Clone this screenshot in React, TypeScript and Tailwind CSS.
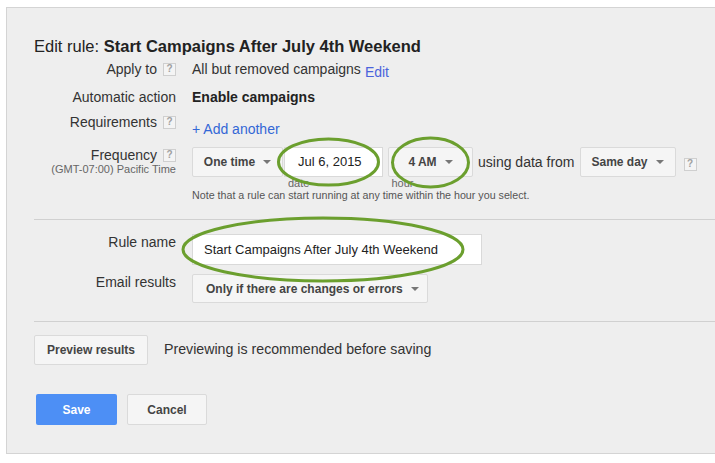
import React from 'react';

function Help() {
    return (
        <span className="inline-flex h-[13px] w-[13px] shrink-0 items-center justify-center border border-[#cfcfcf] bg-[#f4f4f4] text-[10px] font-bold leading-none text-[#a0a0a0]">
            ?
        </span>
    );
}

function Caret() {
    return <span className="ml-[8px] inline-block h-0 w-0 border-x-[4px] border-t-[4px] border-x-transparent border-t-[#777]" />;
}

function DropButton({ label, width }: { label: string; width: string }) {
    return (
        <div className={`flex h-[30px] ${width} shrink-0 items-center justify-center rounded-[2px] border border-[#dadada] bg-[#f5f5f5] text-[12px] font-bold text-[#444]`}>
            {label}
            <Caret />
        </div>
    );
}

function Label({ text, help }: { text: string; help?: boolean }) {
    return (
        <div className="flex w-[142px] shrink-0 items-center justify-end gap-[6px] text-[14px] leading-[20px] text-[#333]">
            <span>{text}</span>
            {help && <Help />}
        </div>
    );
}

export default function App() {
    return (
        <div className="relative h-[463px] w-[715px] overflow-hidden bg-white font-['Liberation_Sans',Arial,sans-serif]">
            <div className="ml-[6px] mt-[7px] flex h-[447px] w-[712px] flex-col border border-r-0 border-[#d4d4d4] bg-[#eeeeee] pl-[27px] pt-[28px]">
                {/* Title */}
                <div className="text-[16.5px] leading-[20px] text-[#222]">
                    Edit rule: <span className="font-bold">Start Campaigns After July 4th Weekend</span>
                </div>

                {/* Apply to */}
                <div className="mt-[3px] flex h-[28px] items-start gap-[16px]">
                    <Label text="Apply to" help />
                    <div className="flex items-start gap-[4px] text-[14px] leading-[20px] text-[#333]">
                        <span>All but removed campaigns</span>
                        <span className="mt-[3px] text-[#4a63dc]">Edit</span>
                    </div>
                </div>

                {/* Automatic action */}
                <div className="flex h-[25px] items-start gap-[16px]">
                    <Label text="Automatic action" />
                    <div className="text-[14px] font-bold leading-[20px] text-[#222]">Enable campaigns</div>
                </div>

                {/* Requirements */}
                <div className="flex h-[33px] items-start gap-[16px]">
                    <Label text="Requirements" help />
                    <div className="mt-[7px] text-[14px] leading-[20px] text-[#3367d6]">+ Add another</div>
                </div>

                {/* Frequency */}
                <div className="flex items-start gap-[16px]">
                    <div className="flex w-[142px] shrink-0 flex-col items-end pt-[1px]">
                        <div className="flex items-center gap-[6px] text-[14px] leading-[18px] text-[#333]">
                            <span>Frequency</span>
                            <Help />
                        </div>
                        <div className="text-[11px] leading-[11px] text-[#666]">(GMT-07:00) Pacific Time</div>
                    </div>
                    <div className="flex flex-col pt-[2px]">
                        <div className="flex items-center">
                            <DropButton label="One time" width="w-[91px]" />
                            <div className="ml-[1px] flex h-[30px] w-[99px] items-center border border-[#d9d9d9] bg-white pl-[13px] text-[13px] text-[#222]">
                                Jul 6, 2015
                            </div>
                            <div className="ml-[5px]">
                                <DropButton label="4 AM" width="w-[85px]" />
                            </div>
                            <span className="ml-[5px] text-[14px] text-[#333]">using data from</span>
                            <div className="ml-[5px]">
                                <DropButton label="Same day" width="w-[96px]" />
                            </div>
                            <div className="ml-[8px]">
                                <Help />
                            </div>
                        </div>
                        <div className="flex h-[12px] text-[11px] leading-[12px] text-[#666]">
                            <span className="ml-[96px]">date</span>
                            <span className="ml-[82px]">hour</span>
                        </div>
                        <div className="text-[10.7px] leading-[12px] text-[#555]">
                            Note that a rule can start running at any time within the hour you select.
                        </div>
                    </div>
                </div>

                <div className="mt-[18px] border-t border-[#d0d0d0]" />

                {/* Rule name */}
                <div className="mt-[12px] flex items-start gap-[16px]">
                    <Label text="Rule name" />
                    <div className="mt-[2px] flex h-[31px] w-[290px] items-center border border-[#d9d9d9] bg-white pl-[11px] text-[13px] text-[#222]">
                        Start Campaigns After July 4th Weekend
                    </div>
                </div>

                {/* Email results */}
                <div className="mt-[7px] flex items-start gap-[16px]">
                    <Label text="Email results" />
                    <div className="mt-[2px] flex h-[29px] w-[236px] items-center rounded-[2px] border border-[#dadada] bg-[#f5f5f5] pl-[13px] text-[12px] font-bold text-[#444]">
                        Only if there are changes or errors
                        <Caret />
                    </div>
                </div>

                <div className="mt-[18px] border-t border-[#d0d0d0]" />

                {/* Preview */}
                <div className="mt-[13px] flex items-center gap-[16px]">
                    <div className="flex h-[30px] w-[114px] items-center justify-center rounded-[2px] border border-[#dadada] bg-[#f5f5f5] text-[12px] font-bold text-[#444]">
                        Preview results
                    </div>
                    <span className="text-[14.2px] text-[#333]">Previewing is recommended before saving</span>
                </div>

                {/* Actions */}
                <div className="ml-[2px] mt-[29px] flex items-center gap-[10px]">
                    <div className="flex h-[31px] w-[81px] items-center justify-center rounded-[2px] bg-[#4d8ff5] text-[12px] font-bold text-white">
                        Save
                    </div>
                    <div className="flex h-[31px] w-[80px] items-center justify-center rounded-[2px] border border-[#dadada] bg-[#f5f5f5] text-[12px] font-bold text-[#444]">
                        Cancel
                    </div>
                </div>
            </div>

            {/* Highlight ellipses drawn over the form */}
            <svg className="pointer-events-none absolute inset-0" width="715" height="463" viewBox="0 0 715 463">
                <ellipse cx="328.5" cy="162" rx="50" ry="23" fill="none" stroke="#6b9f2e" strokeWidth="3" />
                <ellipse cx="430.5" cy="162.5" rx="38" ry="24.5" fill="none" stroke="#6b9f2e" strokeWidth="3" />
                <ellipse cx="323" cy="249.5" rx="140" ry="31.5" fill="none" stroke="#6b9f2e" strokeWidth="3" />
            </svg>
        </div>
    );
}
